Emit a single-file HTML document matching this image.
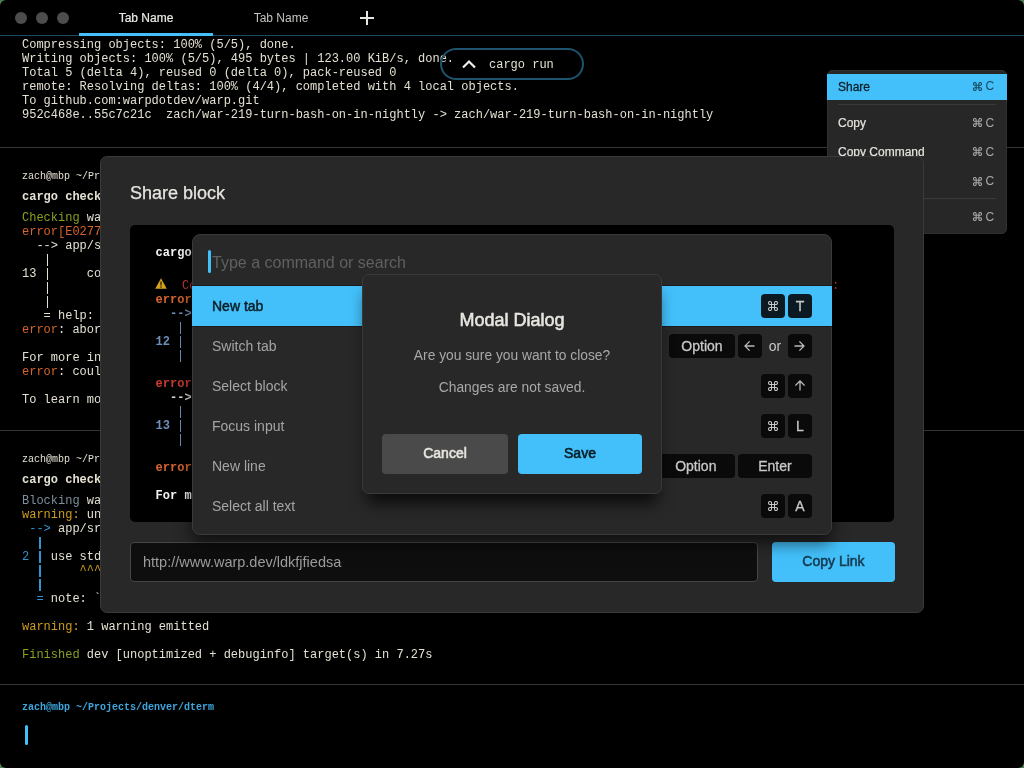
<!DOCTYPE html>
<html><head><meta charset="utf-8">
<style>
*{box-sizing:border-box}
html,body{margin:0;padding:0;width:1024px;height:768px;overflow:hidden;background:#4f7f58}
#win{position:absolute;will-change:transform;left:0;top:0;width:1024px;height:768px;background:#000;border-radius:6px;overflow:hidden}
.sans{font-family:"Liberation Sans",sans-serif}
.mono{font-family:"Liberation Mono",monospace}
.abs{position:absolute}
.term{position:absolute;left:22px;font-family:"Liberation Mono",monospace;font-size:12px;line-height:14px;color:#e4e0d2;white-space:pre}
.sep{position:absolute;left:0;width:1024px;height:1px;background:#353535}
.g{color:#8b9e20}.o{color:#d4642b}.r{color:#c93a30}.y{color:#cc9d1e}.bl{color:#3393d0}.sb{color:#6e8db5}.bg{color:#7c909b}
.b{font-weight:bold}
.prompt{font-size:10px}
.key{position:absolute;height:23.4px;border-radius:4px;background:#0a0a0a;color:#c8c8c8;font-family:"Liberation Sans",sans-serif;font-size:14px;line-height:14px;display:flex;align-items:center;justify-content:center;-webkit-text-stroke:0.3px #c8c8c8}
.key.hl{background:#0b1a22}
</style></head><body>
<div id="win">
  <!-- title bar -->
  <div class="abs" style="left:15px;top:12px;width:12px;height:12px;border-radius:50%;background:#4d4d4d"></div>
  <div class="abs" style="left:36px;top:12px;width:12px;height:12px;border-radius:50%;background:#4d4d4d"></div>
  <div class="abs" style="left:57px;top:12px;width:12px;height:12px;border-radius:50%;background:#4d4d4d"></div>
  <div class="abs sans" style="left:79px;top:11px;width:134px;text-align:center;font-size:12px;line-height:14px;color:#eceae4;-webkit-text-stroke:0.2px #eceae4">Tab Name</div>
  <div class="abs sans" style="left:214px;top:11px;width:134px;text-align:center;font-size:12px;line-height:14px;color:#c4c2bc">Tab Name</div>
  <div class="abs" style="left:360px;top:17px;width:14px;height:2px;background:#e8e6e0"></div>
  <div class="abs" style="left:366px;top:11px;width:2px;height:14px;background:#e8e6e0"></div>
  <div class="abs" style="left:0;top:35px;width:1024px;height:1px;background:#1b4a60"></div>
  <div class="abs" style="left:79px;top:33px;width:134px;height:3px;background:#43c0fa"></div>

  <!-- block 1 -->
  <div class="term" style="top:38px">Compressing objects: 100% (5/5), done.
Writing objects: 100% (5/5), 495 bytes | 123.00 KiB/s, done.
Total 5 (delta 4), reused 0 (delta 0), pack-reused 0
remote: Resolving deltas: 100% (4/4), completed with 4 local objects.
To github.com:warpdotdev/warp.git
952c468e..55c7c21c  zach/war-219-turn-bash-on-in-nightly -> zach/war-219-turn-bash-on-in-nightly</div>
  <div class="abs" style="left:440px;top:48px;width:144px;height:32px;border:2px solid #1d536d;border-radius:16px"></div>
  <svg class="abs" style="left:460px;top:58px" width="18" height="12" viewBox="0 0 18 12"><path d="M3 9.5 L9 3.5 L15 9.5" stroke="#f0eee8" stroke-width="2.2" fill="none"/></svg>
  <div class="term" style="left:489px;top:58px">cargo run</div>
  <div class="sep" style="top:147px"></div>

  <!-- block 2 -->
  <div class="term prompt" style="top:170px">zach@mbp ~/Projects/denver/dterm</div>
  <div class="term b" style="top:190px">cargo check</div>
  <div class="term" style="top:211px"><span class="g">Checking</span> warp v0.1.0 (/Users/zach/Projects/denver/dterm/app)
<span class="o">error[E0277]</span>: the trait bound is not satisfied
  --> app/src/main.rs:13:5

13       commands.push(cmd);


   = help: the trait is not implemented
<span class="o">error</span>: aborting due to previous error

For more information about this error, try `rustc --explain E0277`.
<span class="o">error</span>: could not compile `warp`

To learn more, run the command again with --verbose.</div>
  <div class="sep" style="top:430px"></div>

  <!-- block 3 -->
  <div class="term prompt" style="top:453px">zach@mbp ~/Projects/denver/dterm</div>
  <div class="term b" style="top:473px">cargo check</div>
  <div class="term" style="top:494px"><span class="bg">Blocking</span> waiting for file lock on build directory
<span class="y">warning:</span> unused import: `std::env`
 <span class="bl">--></span> app/src/main.rs:2:5

<span class="bl">2</span>   use std::env;
        <span class="y">^^^</span>

  <span class="bl">=</span> note: `#[warn(unused_imports)]` on by default

<span class="y">warning:</span> 1 warning emitted

<span class="g">Finished</span> dev [unoptimized + debuginfo] target(s) in 7.27s</div>
  <div class="sep" style="top:684px"></div>

  <!-- block 4 -->
  <div class="term prompt b" style="top:701px;color:#3ea6de">zach@mbp ~/Projects/denver/dterm</div>
  <div class="abs" style="left:25px;top:725px;width:3px;height:20px;border-radius:2px;background:#43c0fa"></div>

  <!-- pipes -->
  <div class="abs" style="left:46.55px;top:254.0px;width:1.3px;height:12px;background:#e4e0d2"></div>
  <div class="abs" style="left:46.55px;top:268.0px;width:1.3px;height:12px;background:#e4e0d2"></div>
  <div class="abs" style="left:46.55px;top:282.0px;width:1.3px;height:12px;background:#e4e0d2"></div>
  <div class="abs" style="left:46.55px;top:296.0px;width:1.3px;height:12px;background:#e4e0d2"></div>
  <div class="abs" style="left:39.35px;top:537.2px;width:1.3px;height:12px;background:#3393d0"></div>
  <div class="abs" style="left:39.35px;top:551.2px;width:1.3px;height:12px;background:#3393d0"></div>
  <div class="abs" style="left:39.35px;top:565.2px;width:1.3px;height:12px;background:#3393d0"></div>
  <div class="abs" style="left:39.35px;top:579.2px;width:1.3px;height:12px;background:#3393d0"></div>
  <!-- context menu -->
  <div class="abs" style="left:827px;top:70px;width:180px;height:164px;background:#272727;border:1px solid #303030;border-radius:5px"></div>
  <div class="abs" style="left:827px;top:74px;width:180px;height:26px;background:#43c0fa"></div>
  <div class="abs sans" style="left:838px;top:81px;font-size:12px;line-height:12px;color:#0d2029;-webkit-text-stroke:0.3px #0d2029">Share</div>
  <div class="abs" style="left:838px;top:104px;width:158px;height:1px;background:#3a3a3a"></div>
  <div class="abs sans" style="left:838px;top:117px;font-size:12px;line-height:12px;color:#e6e4de;-webkit-text-stroke:0.2px #e6e4de">Copy</div>
  <div class="abs sans" style="left:838px;top:146px;font-size:12px;line-height:12px;color:#e6e4de;-webkit-text-stroke:0.2px #e6e4de">Copy Command</div>
  <div class="abs" style="left:838px;top:198px;width:158px;height:1px;background:#3a3a3a"></div>

  <svg class="abs" style="left:973px;top:82.0px" width="9" height="9" viewBox="0 0 10 10"><path d="M3.5,3.5h3v3h-3z M3.5,3.5V2A1.5,1.5 0 1 0 2,3.5H3.5 M6.5,3.5V2A1.5,1.5 0 1 1 8,3.5H6.5 M6.5,6.5V8A1.5,1.5 0 1 0 8,6.5H6.5 M3.5,6.5V8A1.5,1.5 0 1 1 2,6.5H3.5" fill="none" stroke="#17475e" stroke-width="1.15"/></svg>
  <div class="abs sans" style="left:985.5px;top:80.4px;font-size:12px;line-height:12px;color:#17475e">C</div>
  <svg class="abs" style="left:973px;top:118.2px" width="9" height="9" viewBox="0 0 10 10"><path d="M3.5,3.5h3v3h-3z M3.5,3.5V2A1.5,1.5 0 1 0 2,3.5H3.5 M6.5,3.5V2A1.5,1.5 0 1 1 8,3.5H6.5 M6.5,6.5V8A1.5,1.5 0 1 0 8,6.5H6.5 M3.5,6.5V8A1.5,1.5 0 1 1 2,6.5H3.5" fill="none" stroke="#a8a8a8" stroke-width="1.15"/></svg>
  <div class="abs sans" style="left:985.5px;top:116.6px;font-size:12px;line-height:12px;color:#a8a8a8">C</div>
  <svg class="abs" style="left:973px;top:147.2px" width="9" height="9" viewBox="0 0 10 10"><path d="M3.5,3.5h3v3h-3z M3.5,3.5V2A1.5,1.5 0 1 0 2,3.5H3.5 M6.5,3.5V2A1.5,1.5 0 1 1 8,3.5H6.5 M6.5,6.5V8A1.5,1.5 0 1 0 8,6.5H6.5 M3.5,6.5V8A1.5,1.5 0 1 1 2,6.5H3.5" fill="none" stroke="#a8a8a8" stroke-width="1.15"/></svg>
  <div class="abs sans" style="left:985.5px;top:145.6px;font-size:12px;line-height:12px;color:#a8a8a8">C</div>
  <svg class="abs" style="left:973px;top:176.5px" width="9" height="9" viewBox="0 0 10 10"><path d="M3.5,3.5h3v3h-3z M3.5,3.5V2A1.5,1.5 0 1 0 2,3.5H3.5 M6.5,3.5V2A1.5,1.5 0 1 1 8,3.5H6.5 M6.5,6.5V8A1.5,1.5 0 1 0 8,6.5H6.5 M3.5,6.5V8A1.5,1.5 0 1 1 2,6.5H3.5" fill="none" stroke="#a8a8a8" stroke-width="1.15"/></svg>
  <div class="abs sans" style="left:985.5px;top:174.9px;font-size:12px;line-height:12px;color:#a8a8a8">C</div>
  <svg class="abs" style="left:973px;top:212.3px" width="9" height="9" viewBox="0 0 10 10"><path d="M3.5,3.5h3v3h-3z M3.5,3.5V2A1.5,1.5 0 1 0 2,3.5H3.5 M6.5,3.5V2A1.5,1.5 0 1 1 8,3.5H6.5 M6.5,6.5V8A1.5,1.5 0 1 0 8,6.5H6.5 M3.5,6.5V8A1.5,1.5 0 1 1 2,6.5H3.5" fill="none" stroke="#a8a8a8" stroke-width="1.15"/></svg>
  <div class="abs sans" style="left:985.5px;top:210.7px;font-size:12px;line-height:12px;color:#a8a8a8">C</div>

  <!-- share block modal -->
  <div class="abs" style="left:100px;top:156px;width:824px;height:457px;background:#282828;border:1px solid #3a3a3a;border-radius:7px"></div>
  <div class="abs sans" style="left:130px;top:184px;font-size:18px;line-height:18px;color:#e8e6e0;-webkit-text-stroke:0.25px #e8e6e0">Share block</div>
  <div class="abs" style="left:130px;top:225px;width:764px;height:297px;background:#000;border-radius:5px"></div>
  <div class="term b" style="left:155.6px;top:245.5px;color:#f4f4f4">cargo check</div>
  <div class="term" style="left:155.6px;top:279px">
<span class="o b">error</span>
  <span class="sb b">--></span>

<span class="sb b">12</span>


<span class="r b">error</span>
  <span class="b" style="color:#d6d6d6">--></span>

<span class="sb b">13</span>


<span class="o b">error</span>

<span class="b" style="color:#f4f4f4">For more</span></div>
  <div class="abs" style="left:180.15px;top:322.2px;width:1.3px;height:12px;background:#6e8db5"></div>
  <div class="abs" style="left:180.15px;top:336.2px;width:1.3px;height:12px;background:#6e8db5"></div>
  <div class="abs" style="left:180.15px;top:350.2px;width:1.3px;height:12px;background:#6e8db5"></div>
  <div class="abs" style="left:180.15px;top:406.2px;width:1.3px;height:12px;background:#6e8db5"></div>
  <div class="abs" style="left:180.15px;top:420.2px;width:1.3px;height:12px;background:#6e8db5"></div>
  <div class="abs" style="left:180.15px;top:434.2px;width:1.3px;height:12px;background:#6e8db5"></div>
  <svg class="abs" style="left:155px;top:278px" width="12" height="11" viewBox="0 0 12 11"><path d="M6 0.3 L11.8 10.7 L0.2 10.7 Z" fill="#d5a21f"/><rect x="5.3" y="3.5" width="1.4" height="4" fill="#3a2a00"/><rect x="5.3" y="8.3" width="1.4" height="1.4" fill="#3a2a00"/></svg>
  <div class="term" style="left:832px;top:279px;color:#c93a30">:</div>
  <div class="term r" style="left:182px;top:279px">Could not compile</div>
  <div class="abs" style="left:130px;top:542px;width:628px;height:40px;background:#0e0e0e;border:1px solid #464646;border-radius:4px"></div>
  <div class="abs sans" style="left:143px;top:555px;font-size:14.5px;line-height:14.5px;color:#9c9c9c">http://www.warp.dev/ldkfjfiedsa</div>
  <div class="abs" style="left:772px;top:542px;width:123px;height:40px;background:#43c0fa;border-radius:4px"></div>
  <div class="abs sans" style="left:772px;top:553.8px;width:123px;text-align:center;font-size:14px;line-height:14px;color:#153b4f;-webkit-text-stroke:0.55px #153b4f">Copy Link</div>

  <!-- command palette -->
  <div class="abs" style="left:192px;top:234px;width:640px;height:301px;background:#282828;border:1px solid #3a3a3a;border-radius:8px;box-shadow:0 8px 16px rgba(0,0,0,0.6)"></div>
  <div class="abs" style="left:208px;top:250px;width:3px;height:23px;border-radius:2px;background:#43c0fa"></div>
  <div class="abs sans" style="left:212px;top:254.5px;font-size:16px;line-height:16px;color:#606060">Type a command or search</div>
  <div class="abs" style="left:192px;top:285px;width:640px;height:42px;background:#1c1a1a"></div>
  <div class="abs" style="left:192px;top:286px;width:640px;height:40px;background:#43c0fa"></div>
  <div class="abs sans b" style="left:212px;top:299px;font-size:14px;line-height:14px;color:#0b1d26;font-weight:normal;-webkit-text-stroke:0.45px #0b1d26">New tab</div>
  <div class="abs sans" style="left:212px;top:339px;font-size:14px;line-height:14px;color:#a5a5a5">Switch tab</div>
  <div class="abs sans" style="left:212px;top:379px;font-size:14px;line-height:14px;color:#a5a5a5">Select block</div>
  <div class="abs sans" style="left:212px;top:419px;font-size:14px;line-height:14px;color:#a5a5a5">Focus input</div>
  <div class="abs sans" style="left:212px;top:459px;font-size:14px;line-height:14px;color:#a5a5a5">New line</div>
  <div class="abs sans" style="left:212px;top:499px;font-size:14px;line-height:14px;color:#a5a5a5">Select all text</div>

  <!-- palette keys -->
  <div class="key hl" style="left:761.3px;top:294.2px;width:23.3px"><svg width="10" height="10" viewBox="0 0 10 10"><path d="M3.5,3.5h3v3h-3z M3.5,3.5V2A1.5,1.5 0 1 0 2,3.5H3.5 M6.5,3.5V2A1.5,1.5 0 1 1 8,3.5H6.5 M6.5,6.5V8A1.5,1.5 0 1 0 8,6.5H6.5 M3.5,6.5V8A1.5,1.5 0 1 1 2,6.5H3.5" fill="none" stroke="#c8c8c8" stroke-width="1.05"/></svg></div>
  <div class="key hl" style="left:788.3px;top:294.2px;width:23.3px">T</div>
  <div class="key" style="left:669.3px;top:334.3px;width:65.3px">Option</div>
  <div class="key" style="left:738.3px;top:334.3px;width:23.3px"><svg width="11" height="10" viewBox="0 0 11 10"><path d="M10.5,5H1 M5.6,0.4L1,5L5.6,9.6" fill="none" stroke="#b9b9b9" stroke-width="1.3"/></svg></div>
  <div class="abs sans" style="left:762px;top:339px;width:26px;text-align:center;font-size:14px;line-height:14px;color:#c8c8c8">or</div>
  <div class="key" style="left:788.3px;top:334.3px;width:23.3px"><svg width="11" height="10" viewBox="0 0 11 10"><path d="M0.5,5H10 M5.4,0.4L10,5L5.4,9.6" fill="none" stroke="#b9b9b9" stroke-width="1.3"/></svg></div>
  <div class="key" style="left:761.3px;top:374.3px;width:23.3px"><svg width="10" height="10" viewBox="0 0 10 10"><path d="M3.5,3.5h3v3h-3z M3.5,3.5V2A1.5,1.5 0 1 0 2,3.5H3.5 M6.5,3.5V2A1.5,1.5 0 1 1 8,3.5H6.5 M6.5,6.5V8A1.5,1.5 0 1 0 8,6.5H6.5 M3.5,6.5V8A1.5,1.5 0 1 1 2,6.5H3.5" fill="none" stroke="#c8c8c8" stroke-width="1.05"/></svg></div>
  <div class="key" style="left:788.3px;top:374.3px;width:23.3px"><svg width="10" height="11" viewBox="0 0 10 11"><path d="M5,10.5V1 M0.4,5.6L5,1L9.6,5.6" fill="none" stroke="#b9b9b9" stroke-width="1.3"/></svg></div>
  <div class="key" style="left:761.3px;top:414.2px;width:23.3px"><svg width="10" height="10" viewBox="0 0 10 10"><path d="M3.5,3.5h3v3h-3z M3.5,3.5V2A1.5,1.5 0 1 0 2,3.5H3.5 M6.5,3.5V2A1.5,1.5 0 1 1 8,3.5H6.5 M6.5,6.5V8A1.5,1.5 0 1 0 8,6.5H6.5 M3.5,6.5V8A1.5,1.5 0 1 1 2,6.5H3.5" fill="none" stroke="#c8c8c8" stroke-width="1.05"/></svg></div>
  <div class="key" style="left:788.3px;top:414.2px;width:23.3px">L</div>
  <div class="key" style="left:657px;top:454.2px;width:77.6px">Option</div>
  <div class="key" style="left:738.3px;top:454.2px;width:73.4px">Enter</div>
  <div class="key" style="left:761.3px;top:494.2px;width:23.3px"><svg width="10" height="10" viewBox="0 0 10 10"><path d="M3.5,3.5h3v3h-3z M3.5,3.5V2A1.5,1.5 0 1 0 2,3.5H3.5 M6.5,3.5V2A1.5,1.5 0 1 1 8,3.5H6.5 M6.5,6.5V8A1.5,1.5 0 1 0 8,6.5H6.5 M3.5,6.5V8A1.5,1.5 0 1 1 2,6.5H3.5" fill="none" stroke="#c8c8c8" stroke-width="1.05"/></svg></div>
  <div class="key" style="left:788.3px;top:494.2px;width:23.3px">A</div>

  <!-- modal dialog -->
  <div class="abs" style="left:362px;top:274px;width:300px;height:220px;background:#282828;border:1px solid #3a3a3a;border-radius:7px;box-shadow:0 14px 16px -5px rgba(0,0,0,0.75)"></div>
  <div class="abs sans" style="left:362px;top:310.8px;width:300px;text-align:center;font-size:18px;line-height:18px;color:#e8e6e0;-webkit-text-stroke:0.55px #e8e6e0">Modal Dialog</div>
  <div class="abs sans" style="left:362px;top:349px;width:300px;text-align:center;font-size:13.8px;line-height:14px;color:#a8a8a8">Are you sure you want to close?</div>
  <div class="abs sans" style="left:362px;top:381px;width:300px;text-align:center;font-size:13.8px;line-height:14px;color:#a8a8a8">Changes are not saved.</div>
  <div class="abs" style="left:382px;top:434px;width:126px;height:40px;background:#4a4a4a;border-radius:4px"></div>
  <div class="abs sans" style="left:382px;top:446px;width:126px;text-align:center;font-size:14px;line-height:14px;color:#e8e6e0;-webkit-text-stroke:0.55px #e8e6e0">Cancel</div>
  <div class="abs" style="left:518px;top:434px;width:124px;height:40px;background:#43c0fa;border-radius:4px"></div>
  <div class="abs sans" style="left:518px;top:446px;width:124px;text-align:center;font-size:14px;line-height:14px;color:#0a1a22;-webkit-text-stroke:0.55px #0a1a22">Save</div>
</div>
</body></html>
